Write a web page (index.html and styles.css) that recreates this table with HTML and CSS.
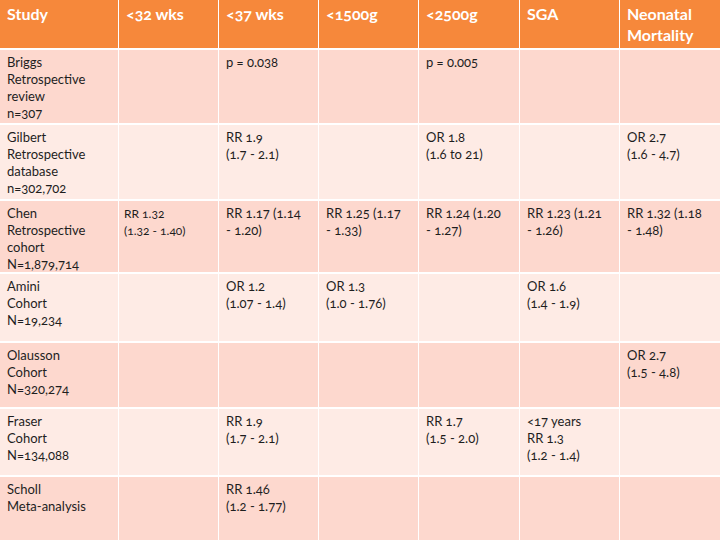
FILE: index.html
```html
<!DOCTYPE html>
<html>
<head>
<meta charset="utf-8">
<link rel="stylesheet" href="styles.css">
</head>
<body>
<div class="table">
  <div class="th">Study</div>
  <div class="th">&lt;32 wks</div>
  <div class="th">&lt;37 wks</div>
  <div class="th">&lt;1500g</div>
  <div class="th">&lt;2500g</div>
  <div class="th">SGA</div>
  <div class="th">Neonatal<br>Mortality</div>

  <div class="td dark">Briggs<br>Retrospective<br>review<br>n=307</div>
  <div class="td dark"></div>
  <div class="td dark">p = 0.038</div>
  <div class="td dark"></div>
  <div class="td dark">p = 0.005</div>
  <div class="td dark"></div>
  <div class="td dark"></div>

  <div class="td light">Gilbert<br>Retrospective<br>database<br>n=302,702</div>
  <div class="td light"></div>
  <div class="td light">RR 1.9<br>(1.7 - 2.1)</div>
  <div class="td light"></div>
  <div class="td light">OR 1.8<br>(1.6 to 21)</div>
  <div class="td light"></div>
  <div class="td light">OR 2.7<br>(1.6 - 4.7)</div>

  <div class="td dark">Chen<br>Retrospective<br>cohort<br>N=1,879,714</div>
  <div class="td dark small">RR 1.32<br>(1.32 - 1.40)</div>
  <div class="td dark">RR 1.17 (1.14<br>- 1.20)</div>
  <div class="td dark">RR 1.25 (1.17<br>- 1.33)</div>
  <div class="td dark">RR 1.24 (1.20<br>- 1.27)</div>
  <div class="td dark">RR 1.23 (1.21<br>- 1.26)</div>
  <div class="td dark">RR 1.32 (1.18<br>- 1.48)</div>

  <div class="td light">Amini<br>Cohort<br>N=19,234</div>
  <div class="td light"></div>
  <div class="td light">OR 1.2<br>(1.07 - 1.4)</div>
  <div class="td light">OR 1.3<br>(1.0 - 1.76)</div>
  <div class="td light"></div>
  <div class="td light">OR 1.6<br>(1.4 - 1.9)</div>
  <div class="td light"></div>

  <div class="td dark">Olausson<br>Cohort<br>N=320,274</div>
  <div class="td dark"></div>
  <div class="td dark"></div>
  <div class="td dark"></div>
  <div class="td dark"></div>
  <div class="td dark"></div>
  <div class="td dark">OR 2.7<br>(1.5 - 4.8)</div>

  <div class="td light">Fraser<br>Cohort<br>N=134,088</div>
  <div class="td light"></div>
  <div class="td light">RR 1.9<br>(1.7 - 2.1)</div>
  <div class="td light"></div>
  <div class="td light">RR 1.7<br>(1.5 - 2.0)</div>
  <div class="td light">&lt;17 years<br>RR 1.3<br>(1.2 - 1.4)</div>
  <div class="td light"></div>

  <div class="td dark">Scholl<br>Meta-analysis</div>
  <div class="td dark"></div>
  <div class="td dark">RR 1.46<br>(1.2 - 1.77)</div>
  <div class="td dark"></div>
  <div class="td dark"></div>
  <div class="td dark"></div>
  <div class="td dark"></div>
</div>
</body>
</html>
```
FILE: styles.css
```css
html, body {
  margin: 0;
  padding: 0;
  background: #ffffff;
}
body {
  width: 720px;
  height: 540px;
  overflow: hidden;
  font-family: Lato, "Open Sans", "DejaVu Sans", sans-serif;
  font-variant-numeric: oldstyle-nums;
}
.table {
  display: grid;
  grid-template-columns: 118px 99px 99px 99px 100px 99px 100px;
  grid-template-rows: 48px 73px 74px 71px 67px 64px 66px 63px;
  column-gap: 1px;
  row-gap: 2px;
  background: #ffffff;
  width: 720px;
  height: 540px;
}
.th {
  background: #f6883b;
  color: #ffffff;
  font-weight: 700;
  font-size: 16px;
  line-height: 21px;
  padding: 3px 7px 0;
}
.td {
  color: #1e1e1e;
  font-size: 13px;
  line-height: 17px;
  padding: 4px 7px 0;
}
.small {
  font-size: 12px;
  padding-left: 5px;
}
.dark {
  background: #fdd8ce;
}
.light {
  background: #feebe5;
}
```
